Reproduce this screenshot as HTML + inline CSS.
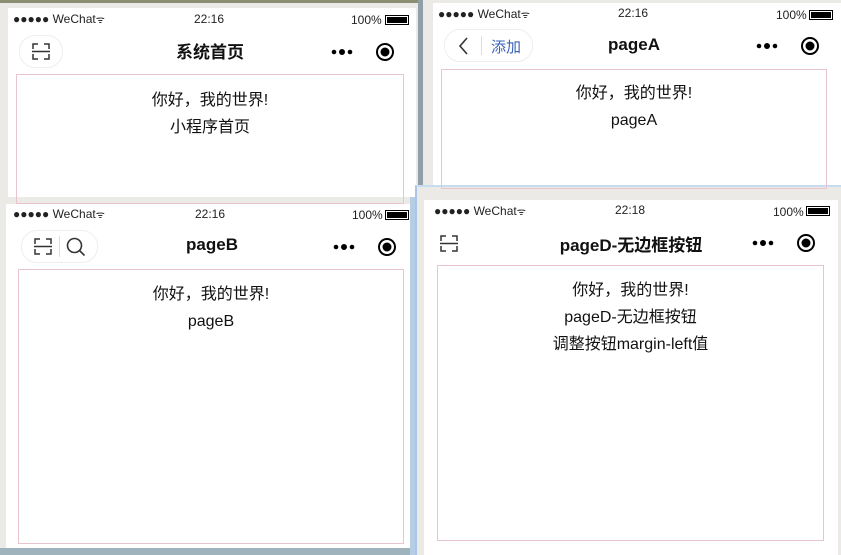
<!DOCTYPE html><html><head><meta charset="utf-8"><style>
*{margin:0;padding:0;box-sizing:border-box}
body{width:841px;height:555px;overflow:hidden;background:#e9e9e5;font-family:"Liberation Sans","Noto Sans CJK SC",sans-serif;position:relative;color:#111}
.a{position:absolute}
.w{background:#fff}
.sb{font-size:12px;color:#222}
.t{font-weight:bold;font-size:17px;text-align:center;font-family:"Liberation Sans","Noto Sans CJK SC",sans-serif}
.pk{border:1px solid #e8c4cc}
.c{text-align:center;font-size:16px;line-height:27px;color:#111}
.bat{width:24px;height:10px;border:1.5px solid #000;padding:1px}
.bat i{display:block;width:100%;height:100%;background:#000}
.cap{border:1px solid #eee;border-radius:16px;background:#fff}
</style></head><body>
<div class="a" style="left:0;top:0;width:422px;height:197px;background:#eceae6"></div>
<div class="a" style="left:0;top:0;width:420px;height:3px;background:#8a8f72"></div>
<div class="a w" style="left:8px;top:8px;width:408px;height:189px"></div>
<div class="a" style="left:418px;top:0;width:5px;height:197px;background:#8fa0a8"></div>
<div class="a" style="left:425px;top:0;width:416px;height:185px;background:#eceae6"></div>
<div class="a w" style="left:433px;top:3px;width:408px;height:182px"></div>
<div class="a" style="left:0;top:197px;width:416px;height:358px;background:#eceae6"></div>
<div class="a w" style="left:6px;top:204px;width:404px;height:344px"></div>
<div class="a" style="left:0;top:548px;width:416px;height:7px;background:#9fb3bd"></div>
<div class="a" style="left:410px;top:197px;width:5px;height:358px;background:#b6cde6"></div>
<div class="a" style="left:415px;top:185px;width:426px;height:370px;background:#eceae6;border-left:2px solid #a9c6e8;border-top:2px solid #c8dcf0"></div>
<div class="a w" style="left:424px;top:200px;width:414px;height:355px"></div>

<div class="a sb" style="left:13px;top:12px">●●●●● WeChat<span style="font-size:10px">ᯤ</span></div>
<div class="a sb" style="left:194px;top:12px">22:16</div>
<div class="a sb" style="left:351px;top:13px">100%</div>
<div class="a bat" style="left:385px;top:15px"><i></i></div>
<div class="a cap" style="left:19px;top:35px;width:44px;height:33px"></div>
<svg class="a" style="left:32px;top:43px" width="18" height="17" fill="none" stroke="#333" stroke-width="1.5"><path d="M1 6V1h5M12 1h5v5M1 11v5h5M12 16h5v-5M0 8.5h18"/></svg>
<div class="a t" style="left:110px;top:38px;width:200px">系统首页</div>
<svg class="a" style="left:330px;top:45px" width="24" height="14"><circle cx="4" cy="7" r="2.3"/><circle cx="12" cy="7" r="3"/><circle cx="20" cy="7" r="2.3"/></svg>
<svg class="a" style="left:375px;top:42px" width="20" height="20" fill="none" stroke="#000" stroke-width="2"><circle cx="10" cy="10" r="8"/><circle cx="10" cy="10" r="3.5" fill="#000"/></svg>
<div class="a pk" style="left:16px;top:74px;width:388px;height:130px"></div>
<div class="a c" style="left:16px;top:87px;width:388px">你好，我的世界!<br>小程序首页</div>

<div class="a sb" style="left:438px;top:7px">●●●●● WeChat<span style="font-size:10px">ᯤ</span></div>
<div class="a sb" style="left:618px;top:6px">22:16</div>
<div class="a sb" style="left:776px;top:8px">100%</div>
<div class="a bat" style="left:809px;top:10px"><i></i></div>
<div class="a cap" style="left:444px;top:29px;width:89px;height:33px"></div>
<svg class="a" style="left:458px;top:37px" width="12" height="18" fill="none" stroke="#333" stroke-width="1.6"><path d="M9 1L2 9l7 8"/></svg>
<div class="a" style="left:481px;top:36px;width:1px;height:19px;background:#ddd"></div>
<div class="a" style="left:491px;top:36px;font-size:15px;color:#3a63b8">添加</div>
<div class="a t" style="left:534px;top:35px;width:200px">pageA</div>
<svg class="a" style="left:755px;top:39px" width="24" height="14"><circle cx="4" cy="7" r="2.3"/><circle cx="12" cy="7" r="3"/><circle cx="20" cy="7" r="2.3"/></svg>
<svg class="a" style="left:800px;top:36px" width="20" height="20" fill="none" stroke="#000" stroke-width="2"><circle cx="10" cy="10" r="8"/><circle cx="10" cy="10" r="3.5" fill="#000"/></svg>
<div class="a pk" style="left:441px;top:69px;width:386px;height:120px"></div>
<div class="a c" style="left:441px;top:80px;width:386px">你好，我的世界!<br>pageA</div>

<div class="a sb" style="left:13px;top:207px">●●●●● WeChat<span style="font-size:10px">ᯤ</span></div>
<div class="a sb" style="left:195px;top:207px">22:16</div>
<div class="a sb" style="left:352px;top:208px">100%</div>
<div class="a bat" style="left:385px;top:210px"><i></i></div>
<div class="a cap" style="left:21px;top:230px;width:77px;height:33px"></div>
<svg class="a" style="left:34px;top:238px" width="18" height="17" fill="none" stroke="#333" stroke-width="1.5"><path d="M1 6V1h5M12 1h5v5M1 11v5h5M12 16h5v-5M0 8.5h18"/></svg>
<div class="a" style="left:59px;top:236px;width:1px;height:21px;background:#ddd"></div>
<svg class="a" style="left:66px;top:237px" width="20" height="20" fill="none" stroke="#333" stroke-width="1.6"><circle cx="8.5" cy="8.5" r="7"/><path d="M13.5 13.5l5 5"/></svg>
<div class="a t" style="left:112px;top:235px;width:200px">pageB</div>
<svg class="a" style="left:332px;top:240px" width="24" height="14"><circle cx="4" cy="7" r="2.3"/><circle cx="12" cy="7" r="3"/><circle cx="20" cy="7" r="2.3"/></svg>
<svg class="a" style="left:377px;top:237px" width="20" height="20" fill="none" stroke="#000" stroke-width="2"><circle cx="10" cy="10" r="8"/><circle cx="10" cy="10" r="3.5" fill="#000"/></svg>
<div class="a pk" style="left:18px;top:269px;width:386px;height:275px"></div>
<div class="a c" style="left:18px;top:281px;width:386px">你好，我的世界!<br>pageB</div>

<div class="a sb" style="left:434px;top:204px">●●●●● WeChat<span style="font-size:10px">ᯤ</span></div>
<div class="a sb" style="left:615px;top:203px">22:18</div>
<div class="a sb" style="left:773px;top:205px">100%</div>
<div class="a bat" style="left:806px;top:206px"><i></i></div>
<svg class="a" style="left:440px;top:235px" width="18" height="17" fill="none" stroke="#333" stroke-width="1.5"><path d="M1 6V1h5M12 1h5v5M1 11v5h5M12 16h5v-5M0 8.5h18"/></svg>
<div class="a t" style="left:531px;top:231px;width:200px">pageD-无边框按钮</div>
<svg class="a" style="left:751px;top:236px" width="24" height="14"><circle cx="4" cy="7" r="2.3"/><circle cx="12" cy="7" r="3"/><circle cx="20" cy="7" r="2.3"/></svg>
<svg class="a" style="left:796px;top:233px" width="20" height="20" fill="none" stroke="#000" stroke-width="2"><circle cx="10" cy="10" r="8"/><circle cx="10" cy="10" r="3.5" fill="#000"/></svg>
<div class="a pk" style="left:437px;top:265px;width:387px;height:276px"></div>
<div class="a c" style="left:437px;top:277px;width:387px">你好，我的世界!<br>pageD-无边框按钮<br>调整按钮margin-left值</div>
</body></html>
